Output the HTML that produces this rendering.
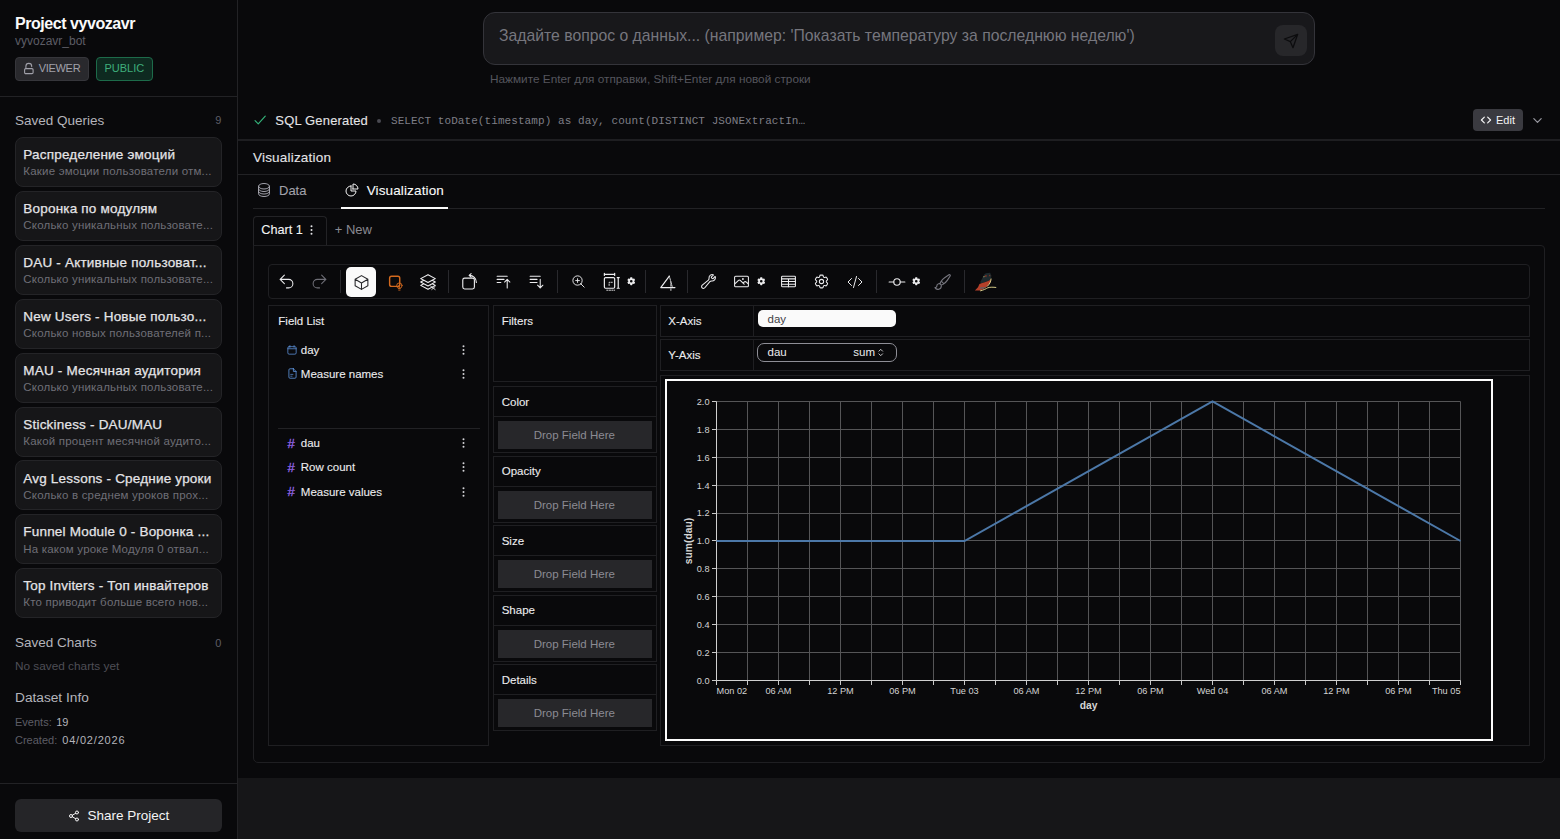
<!DOCTYPE html>
<html lang="ru">
<head>
<meta charset="utf-8">
<title>Project vyvozavr</title>
<style>
*{box-sizing:border-box;margin:0;padding:0}
html,body{width:1560px;height:839px;overflow:hidden;background:#09090b}
body{font-family:"Liberation Sans",sans-serif;color:#e4e4e7;position:relative;font-size:13px}
.t{position:absolute;white-space:nowrap;line-height:1}
svg{display:block;overflow:visible}
#side{position:absolute;left:0;top:0;width:238px;height:839px;border-right:1px solid #222225;background:#09090b}
.badge{position:absolute;top:57px;height:24px;border-radius:4px;font-size:11px;line-height:22px;white-space:nowrap}
.q{position:absolute;left:15px;width:207px;height:50px;border:1px solid #242427;border-radius:8px;background:#161618}
.q b{position:absolute;left:7.300px;top:9.200px;font-size:13.500px;letter-spacing:0.200px;font-weight:400;-webkit-text-stroke:0.250px #e4e4e7;color:#e4e4e7;white-space:nowrap;line-height:16px}
.q i{position:absolute;left:7.300px;top:26.300px;font-style:normal;font-size:11.500px;letter-spacing:0.200px;color:#6f6f77;white-space:nowrap;line-height:14px}
#main{position:absolute;left:238px;top:0;width:1322px;height:778px;background:#09090b}
#foot{position:absolute;left:238px;top:778px;width:1322px;height:61px;background:#161618}
.hl{position:absolute;height:1px;background:#222225}
.vl{position:absolute;width:1px;background:#222225}
.box{position:absolute;border:1px solid #1f1f22}
.drop{position:absolute;left:4px;width:155px;height:27px;background:#28282b;color:#8a8a91;font-size:12px;text-align:center;line-height:27px}
.lbl{position:absolute;font-size:12px;color:#ececee;white-space:nowrap;line-height:14px}
.ico{position:absolute;fill:none;stroke:#ececee;stroke-width:1.5;stroke-linecap:round;stroke-linejoin:round}
.ax text{font-family:"Liberation Sans",sans-serif;font-size:9.200px;fill:#d4d4d4}
</style>
</head>
<body>
<div id="side">
<div class="t" style="left:15px;top:16px;font-size:16px;color:#fafafa;letter-spacing:-0.450px;font-weight:700">Project vyvozavr</div>
<div class="t" style="left:15px;top:35px;font-size:12px;color:#5d5d66;">vyvozavr_bot</div>
<div class="badge" style="left:15px;width:74px;background:#29292d;border:1px solid #36363b;color:#a1a1aa"><svg class="ico" style="left:7px;top:3.500px;stroke:#a1a1aa;stroke-width:1.100" width="12" height="13" viewBox="0 0 12 13"><rect x="1.600" y="6.600" width="8.500" height="5" rx="1.200"/><path d="M2.900 6.500V4.300a2.900 2.900 0 0 1 5.800 0v.300"/></svg><span style="position:absolute;left:22.700px;top:-1px;letter-spacing:-0.300px">VIEWER</span></div>
<div class="badge" style="left:96px;width:57px;background:#0e2a20;border:1px solid #1d6b4a;color:#3fae7c"><span style="position:absolute;left:7.500px;top:-1px">PUBLIC</span></div>
<div class="hl" style="left:0;top:96px;width:237px"></div>
<div class="t" style="left:15px;top:114px;font-size:13.5px;color:#b4b4bb;">Saved Queries</div>
<div class="t" style="left:215.3px;top:115px;font-size:11px;color:#5d5d66;">9</div>
<div class="q" style="top:137.00px"><b>Распределение эмоций</b><i>Какие эмоции пользователи отм...</i></div>
<div class="q" style="top:190.90px"><b>Воронка по модулям</b><i>Сколько уникальных пользовате...</i></div>
<div class="q" style="top:244.80px"><b>DAU - Активные пользоват...</b><i>Сколько уникальных пользовате...</i></div>
<div class="q" style="top:298.70px"><b>New Users - Новые пользо...</b><i>Сколько новых пользователей п...</i></div>
<div class="q" style="top:352.60px"><b>MAU - Месячная аудитория</b><i>Сколько уникальных пользовате...</i></div>
<div class="q" style="top:406.50px"><b>Stickiness - DAU/MAU</b><i>Какой процент месячной аудито...</i></div>
<div class="q" style="top:460.40px"><b>Avg Lessons - Средние уроки</b><i>Сколько в среднем уроков прох...</i></div>
<div class="q" style="top:514.30px"><b>Funnel Module 0 - Воронка ...</b><i>На каком уроке Модуля 0 отвал...</i></div>
<div class="q" style="top:568.20px"><b>Top Inviters - Топ инвайтеров</b><i>Кто приводит больше всего нов...</i></div>
<div class="t" style="left:15px;top:636px;font-size:13.5px;color:#b4b4bb;">Saved Charts</div>
<div class="t" style="left:215.3px;top:638px;font-size:11px;color:#5d5d66;">0</div>
<div class="t" style="left:15px;top:661px;font-size:11.8px;color:#4e4e56;">No saved charts yet</div>
<div class="t" style="left:15px;top:691px;font-size:13.7px;color:#b4b4bb;">Dataset Info</div>
<div class="t" style="left:15px;top:717px;font-size:11px;color:#5d5d66;">Events: <span style="color:#b4b4bb;margin-left:1.500px">19</span></div>
<div class="t" style="left:15px;top:735px;font-size:11px;color:#5d5d66;">Created: <span style="color:#b4b4bb;letter-spacing:0.800px;margin-left:2px">04/02/2026</span></div>
<div class="hl" style="left:0;top:783px;width:237px"></div>
<div style="position:absolute;left:15px;top:799px;width:207px;height:33px;border-radius:6px;background:#252528"><svg class="ico" style="left:53px;top:10.500px;stroke:#f4f4f5;stroke-width:2" width="12" height="12" viewBox="0 0 24 24"><circle cx="18" cy="5" r="3"/><circle cx="6" cy="12" r="3"/><circle cx="18" cy="19" r="3"/><path d="M8.590 13.510l6.830 3.980M15.410 6.510l-6.820 3.980"/></svg></div>
<div class="t" style="left:87.4px;top:809px;font-size:13.5px;color:#f4f4f5;">Share Project</div>
</div>
<div id="main"></div>
<div id="foot"></div>
<div style="position:absolute;left:483px;top:12px;width:832px;height:53px;border-radius:12px;background:#18181b;border:1px solid #34343a"></div>
<div class="t" style="left:499px;top:28px;font-size:15.75px;color:#76767e;">Задайте вопрос о данных... (например: 'Показать температуру за последнюю неделю')</div>
<div style="position:absolute;left:1275px;top:24.500px;width:31.500px;height:31.500px;border-radius:8px;background:#27272a"><svg class="ico" style="left:8px;top:8px;stroke:#0c0c0e;stroke-width:1.900" width="16" height="16" viewBox="0 0 24 24"><path d="M22 2 11 13M22 2l-7 20-4-9-9-4 20-7Z"/></svg></div>
<div class="t" style="left:490px;top:74px;font-size:11.8px;color:#55555d;">Нажмите Enter для отправки, Shift+Enter для новой строки</div>
<svg class="ico" style="left:253px;top:113px;stroke:#34b37a;stroke-width:2" width="14" height="14" viewBox="0 0 24 24"><path d="M3.500 13l5.500 5.500L21 5.500"/></svg>
<div class="t" style="left:275.3px;top:114px;font-size:13px;color:#e4e4e7;letter-spacing:0.160px;-webkit-text-stroke:0.100px #e4e4e7">SQL Generated</div>
<div style="position:absolute;left:377px;top:119px;width:4px;height:4px;border-radius:2px;background:#4a4a52"></div>
<div class="t" style="left:391px;top:116px;font-size:11px;color:#7e7e86;font-family:'Liberation Mono',monospace;letter-spacing:0.080px">SELECT toDate(timestamp) as day, count(DISTINCT JSONExtractIn…</div>
<div style="position:absolute;left:1473px;top:109px;width:50px;height:22px;border-radius:4px;background:#3a3a40"><svg class="ico" style="left:8px;top:6px;stroke:#f4f4f5;stroke-width:2.800" width="10" height="10" viewBox="0 0 24 24"><path d="M8 5 1 12l7 7M16 5l7 7-7 7"/></svg></div>
<div class="t" style="left:1496px;top:115px;font-size:11px;color:#f4f4f5;">Edit</div>
<svg class="ico" style="left:1532px;top:115px;stroke:#9a9aa2;stroke-width:2.600" width="11" height="11" viewBox="0 0 24 24"><path d="M4 8l8 8 8-8"/></svg>
<div class="hl" style="left:238px;top:139px;width:1322px;height:2px;background:#1e1e21"></div>
<div class="t" style="left:253px;top:151px;font-size:13.5px;color:#e4e4e7;letter-spacing:0.200px;-webkit-text-stroke:0.100px #e4e4e7">Visualization</div>
<div class="hl" style="left:238px;top:174px;width:1322px"></div>
<svg class="ico" style="left:255.600px;top:182px;stroke:#a1a1aa;stroke-width:1.500" width="16" height="16" viewBox="0 0 24 24"><path d="M20.250 6.375c0 2.278-3.694 4.125-8.250 4.125S3.750 8.653 3.750 6.375m16.500 0c0-2.278-3.694-4.125-8.250-4.125S3.750 4.097 3.750 6.375m16.500 0v11.250c0 2.278-3.694 4.125-8.250 4.125s-8.250-1.847-8.250-4.125V6.375m16.500 0v3.750m-16.500-3.750v3.750m16.500 0v3.750C20.250 16.153 16.556 18 12 18s-8.250-1.847-8.250-4.125v-3.750m16.500 0c0 2.278-3.694 4.125-8.250 4.125s-8.250-1.847-8.250-4.125"/></svg>
<div class="t" style="left:279px;top:184px;font-size:13px;color:#a1a1aa;-webkit-text-stroke:0.100px #a1a1aa">Data</div>
<svg class="ico" style="left:343.800px;top:182.200px;stroke:#f4f4f5;stroke-width:1.500" width="16" height="16" viewBox="0 0 24 24"><path d="M10.500 6a7.500 7.500 0 1 0 7.500 7.500h-7.500V6Z"/><path d="M13.500 10.500H21A7.500 7.500 0 0 0 13.500 3v7.500Z"/></svg>
<div class="t" style="left:366.7px;top:184px;font-size:13.5px;color:#fafafa;letter-spacing:0.130px;-webkit-text-stroke:0.100px #fafafa">Visualization</div>
<div class="hl" style="left:253px;top:208px;width:1292px"></div>
<div style="position:absolute;left:341px;top:207px;width:107px;height:2px;background:#fafafa"></div>
<div style="position:absolute;left:253px;top:216px;width:74px;height:30px;border:1px solid #232326;border-bottom:none;border-radius:4px 4px 0 0"></div>
<div class="t" style="left:261.3px;top:224px;font-size:12.7px;color:#f4f4f5;-webkit-text-stroke:0.100px #f4f4f5">Chart 1</div>
<svg class="ico" style="left:309.500px;top:225px;stroke:none;fill:#e4e4e7" width="3" height="10" viewBox="0 0 3 10"><circle cx="1.500" cy="1.200" r="1"/><circle cx="1.500" cy="5" r="1"/><circle cx="1.500" cy="8.800" r="1"/></svg>
<div class="t" style="left:334.7px;top:223px;font-size:13px;color:#8a8a92;">+ New</div>
<div style="position:absolute;left:253px;top:245px;width:1292px;height:518px;border:1px solid #1f1f22;border-radius:0 4px 5px 5px"></div>
<div class="box" style="left:268px;top:264px;width:1262px;height:35px;border-radius:4px;border-color:#1f1f22"></div>
<svg class="ico" style="left:277.5px;top:273.0px;stroke:#ececee;stroke-width:1.5" width="17" height="17" viewBox="0 0 24 24"><path d="M9 15 3 9m0 0 6-6M3 9h12a6 6 0 0 1 0 12h-3"/></svg>
<svg class="ico" style="left:310.5px;top:273.0px;stroke:#6e6e76;stroke-width:1.5" width="17" height="17" viewBox="0 0 24 24"><path d="m15 15 6-6m0 0-6-6m6 6H9a6 6 0 0 0 0 12h3"/></svg>
<div class="vl" style="left:340px;top:270px;height:23px;background:#29292d"></div>
<div style="position:absolute;left:346px;top:267px;width:30px;height:30px;border-radius:5px;background:#fafafa"></div>
<svg class="ico" style="left:352.5px;top:273.5px;stroke:#27272a;stroke-width:1.5" width="17" height="17" viewBox="0 0 24 24"><path d="m21 7.5-9-5.25L3 7.5m18 0-9 5.25m9-5.25v9l-9 5.25M3 7.5l9 5.25M3 7.5v9l9 5.25m0-9v9"/></svg>
<svg class="ico" style="left:387.0px;top:274.0px;stroke:#d2691e;stroke-width:1.5" width="18" height="18" viewBox="0 0 24 24"><rect x="3.5" y="3" width="13.5" height="13.5" rx="2.5" stroke-width="1.9"/><circle cx="16.5" cy="15.5" r="3.6" stroke-width="1.2"/><path d="M15.2 19.5h2.6M15.6 21.5h1.8M16.5 15.2v3.6" stroke-width="1.1"/></svg>
<svg class="ico" style="left:419.0px;top:272.5px;stroke:#ececee;stroke-width:1.5" width="18" height="18" viewBox="0 0 24 24"><path d="M6.429 9.75 2.25 12l4.179 2.25m0-4.5 5.571 3 5.571-3m-11.142 0L2.25 7.5 12 2.25l9.75 5.25-4.179 2.25m0 0L21.75 12l-4.179 2.25m0 0 4.179 2.25L12 21.75 2.25 16.5l4.179-2.25m11.142 0-5.571 3-5.571-3"/><path d="M15.5 17.5l6 4.5M17 22l4.5-4" stroke-width="1.2"/></svg>
<div class="vl" style="left:448px;top:270px;height:23px;background:#29292d"></div>
<svg class="ico" style="left:460.0px;top:272.5px;stroke:#ececee;stroke-width:1.5" width="18" height="18" viewBox="0 0 24 24"><rect x="3.700" y="6.800" width="15.500" height="14.500" rx="2.500"/><path d="M12.500 3.200A9.300 9.300 0 0 1 21.800 12.500"/><path d="M14.800 .800 12.300 3.100l2.500 2.500"/></svg>
<svg class="ico" style="left:494.5px;top:273.0px;stroke:#ececee;stroke-width:1.5" width="17" height="17" viewBox="0 0 24 24"><path d="M3 4.5h14.25M3 9h9.75M3 13.5h5.25m5.25-.75L17.25 9m0 0L21 12.75M17.25 9v12"/></svg>
<svg class="ico" style="left:527.5px;top:273.0px;stroke:#ececee;stroke-width:1.5" width="17" height="17" viewBox="0 0 24 24"><path d="M3 4.5h14.25M3 9h9.75M3 13.5h9.75m4.5-4.5v12m0 0-3.75-3.75M17.25 21 21 17.25"/></svg>
<div class="vl" style="left:557px;top:270px;height:23px;background:#29292d"></div>
<svg class="ico" style="left:570.5px;top:273.7px;stroke:#ececee;stroke-width:1.5" width="15" height="15" viewBox="0 0 24 24"><path d="m21 21-5.197-5.197m0 0A7.5 7.5 0 1 0 5.196 5.196a7.5 7.5 0 0 0 10.607 10.607ZM10.5 7.5v6m3-3h-6"/></svg>
<svg class="ico" style="left:601.5px;top:272.0px;stroke:#ececee;stroke-width:1.5" width="19" height="19" viewBox="0 0 24 24"><rect x="3" y="7" width="13" height="13.5" rx="1.5"/><path d="M3 3h13M3 1.7v2.6M16 1.7v2.6M20.5 7v13.5M19.2 7h2.6M19.2 20.5h2.6"/><path d="M9 17v-4h4M6 23h10" stroke-dasharray="1.6 1.6" stroke-width="1.1"/></svg>
<svg class="ico" style="left:625.75px;top:276.25px;stroke:none;fill:#ececee" width="10.500" height="10.500" viewBox="0 0 24 24"><path fill-rule="evenodd" d="M9.594 3.94c.09-.542.56-.94 1.11-.94h2.593c.55 0 1.02.398 1.11.94l.213 1.281c.063.374.313.686.645.87.074.04.147.083.22.127.325.196.72.257 1.075.124l1.217-.456a1.125 1.125 0 0 1 1.37.49l1.296 2.247a1.125 1.125 0 0 1-.26 1.431l-1.003.827c-.293.241-.438.613-.43.992a7.723 7.723 0 0 1 0 .255c-.008.378.137.75.43.991l1.004.827c.424.35.534.955.26 1.43l-1.298 2.247a1.125 1.125 0 0 1-1.369.491l-1.217-.456c-.355-.133-.75-.072-1.076.124a6.47 6.47 0 0 1-.22.128c-.331.183-.581.495-.644.869l-.213 1.281c-.09.543-.56.94-1.11.94h-2.594c-.55 0-1.019-.398-1.11-.94l-.213-1.281c-.062-.374-.312-.686-.644-.87a6.52 6.52 0 0 1-.22-.127c-.325-.196-.72-.257-1.076-.124l-1.217.456a1.125 1.125 0 0 1-1.369-.49l-1.297-2.247a1.125 1.125 0 0 1 .26-1.431l1.004-.827c.292-.24.437-.613.43-.991a6.932 6.932 0 0 1 0-.255c.007-.38-.138-.751-.43-.992l-1.004-.827a1.125 1.125 0 0 1-.26-1.43l1.297-2.247a1.125 1.125 0 0 1 1.37-.491l1.216.456c.356.133.751.072 1.076-.124.072-.044.146-.086.22-.128.332-.183.582-.495.644-.869l.214-1.28ZM15 12a3 3 0 1 1-6 0 3 3 0 0 1 6 0Z"/></svg>
<div class="vl" style="left:645px;top:270px;height:23px;background:#29292d"></div>
<svg class="ico" style="left:657.5px;top:272.0px;stroke:#ececee;stroke-width:1.5" width="19" height="19" viewBox="0 0 24 24"><path d="M14.300 5.200 3.500 19.700h17.900"/><path d="M14.300 5.200l4 14.500M16.300 12.700v11" stroke-width="1.100" stroke-dasharray="1.600 1.400"/></svg>
<div class="vl" style="left:687px;top:270px;height:23px;background:#29292d"></div>
<svg class="ico" style="left:700.0px;top:273.0px;stroke:#ececee;stroke-width:1.5" width="17" height="17" viewBox="0 0 24 24"><path d="M21.75 6.75a4.5 4.5 0 0 1-4.884 4.484c-1.076-.091-2.264.071-2.95.904l-7.152 8.684a2.548 2.548 0 1 1-3.586-3.586l8.684-7.152c.833-.686.995-1.874.904-2.95a4.5 4.5 0 0 1 6.336-4.486l-3.276 3.276a3.004 3.004 0 0 0 2.25 2.25l3.276-3.276c.256.565.398 1.192.398 1.852Z"/></svg>
<svg class="ico" style="left:733.0px;top:273.0px;stroke:#ececee;stroke-width:1.5" width="17" height="17" viewBox="0 0 24 24"><path d="m2.25 15.75 5.159-5.159a2.25 2.25 0 0 1 3.182 0l5.159 5.159m-1.5-1.5 1.409-1.409a2.25 2.25 0 0 1 3.182 0l2.909 2.909m-18 3.75h16.5a1.500 1.500 0 0 0 1.500-1.500V6a1.500 1.500 0 0 0-1.500-1.500H3.750A1.500 1.500 0 0 0 2.250 6v12a1.500 1.500 0 0 0 1.500 1.500Z"/><circle cx="14" cy="8.4" r=".6"/></svg>
<svg class="ico" style="left:755.75px;top:276.25px;stroke:none;fill:#ececee" width="10.500" height="10.500" viewBox="0 0 24 24"><path fill-rule="evenodd" d="M9.594 3.94c.09-.542.56-.94 1.11-.94h2.593c.55 0 1.02.398 1.11.94l.213 1.281c.063.374.313.686.645.87.074.04.147.083.22.127.325.196.72.257 1.075.124l1.217-.456a1.125 1.125 0 0 1 1.37.49l1.296 2.247a1.125 1.125 0 0 1-.26 1.431l-1.003.827c-.293.241-.438.613-.43.992a7.723 7.723 0 0 1 0 .255c-.008.378.137.75.43.991l1.004.827c.424.35.534.955.26 1.43l-1.298 2.247a1.125 1.125 0 0 1-1.369.491l-1.217-.456c-.355-.133-.75-.072-1.076.124a6.47 6.47 0 0 1-.22.128c-.331.183-.581.495-.644.869l-.213 1.281c-.09.543-.56.94-1.11.94h-2.594c-.55 0-1.019-.398-1.11-.94l-.213-1.281c-.062-.374-.312-.686-.644-.87a6.52 6.52 0 0 1-.22-.127c-.325-.196-.72-.257-1.076-.124l-1.217.456a1.125 1.125 0 0 1-1.369-.49l-1.297-2.247a1.125 1.125 0 0 1 .26-1.431l1.004-.827c.292-.24.437-.613.43-.991a6.932 6.932 0 0 1 0-.255c.007-.38-.138-.751-.43-.992l-1.004-.827a1.125 1.125 0 0 1-.26-1.43l1.297-2.247a1.125 1.125 0 0 1 1.37-.491l1.216.456c.356.133.751.072 1.076-.124.072-.044.146-.086.22-.128.332-.183.582-.495.644-.869l.214-1.28ZM15 12a3 3 0 1 1-6 0 3 3 0 0 1 6 0Z"/></svg>
<svg class="ico" style="left:780.0px;top:273.0px;stroke:#ececee;stroke-width:1.5" width="17" height="17" viewBox="0 0 24 24"><rect x="2.25" y="4.5" width="19.5" height="15" rx="1.3"/><path d="M2.25 8.25h19.500M2.250 12h19.500M2.250 15.750h19.500M12 8.250v11.250"/></svg>
<svg class="ico" style="left:813.0px;top:273.0px;stroke:#ececee;stroke-width:1.5" width="17" height="17" viewBox="0 0 24 24"><path d="M9.594 3.94c.09-.542.56-.94 1.11-.94h2.593c.55 0 1.02.398 1.11.94l.213 1.281c.063.374.313.686.645.87.074.04.147.083.22.127.325.196.72.257 1.075.124l1.217-.456a1.125 1.125 0 0 1 1.37.49l1.296 2.247a1.125 1.125 0 0 1-.26 1.431l-1.003.827c-.293.241-.438.613-.43.992a7.723 7.723 0 0 1 0 .255c-.008.378.137.75.43.991l1.004.827c.424.35.534.955.26 1.43l-1.298 2.247a1.125 1.125 0 0 1-1.369.491l-1.217-.456c-.355-.133-.75-.072-1.076.124a6.47 6.47 0 0 1-.22.128c-.331.183-.581.495-.644.869l-.213 1.281c-.09.543-.56.94-1.11.94h-2.594c-.55 0-1.019-.398-1.11-.94l-.213-1.281c-.062-.374-.312-.686-.644-.87a6.52 6.52 0 0 1-.22-.127c-.325-.196-.72-.257-1.076-.124l-1.217.456a1.125 1.125 0 0 1-1.369-.49l-1.297-2.247a1.125 1.125 0 0 1 .26-1.431l1.004-.827c.292-.24.437-.613.43-.991a6.932 6.932 0 0 1 0-.255c.007-.38-.138-.751-.43-.992l-1.004-.827a1.125 1.125 0 0 1-.26-1.43l1.297-2.247a1.125 1.125 0 0 1 1.37-.491l1.216.456c.356.133.751.072 1.076-.124.072-.044.146-.086.22-.128.332-.183.582-.495.644-.869l.214-1.28Z"/><path d="M15 12a3 3 0 1 1-6 0 3 3 0 0 1 6 0Z"/></svg>
<svg class="ico" style="left:847.3px;top:273.5px;stroke:#ececee;stroke-width:1.5" width="16" height="16" viewBox="0 0 24 24"><path d="M17.25 6.75 22.5 12l-5.25 5.25m-10.5 0L1.5 12l5.25-5.25m7.500-3-4.500 16.500"/></svg>
<div class="vl" style="left:876px;top:270px;height:23px;background:#29292d"></div>
<svg class="ico" style="left:888.0px;top:272.5px;stroke:#ececee;stroke-width:1.5" width="18" height="18" viewBox="0 0 24 24"><circle cx="12" cy="12" r="4.300"/><path d="M1.500 12h6.200M16.300 12h6.200"/></svg>
<svg class="ico" style="left:910.75px;top:276.25px;stroke:none;fill:#ececee" width="10.500" height="10.500" viewBox="0 0 24 24"><path fill-rule="evenodd" d="M9.594 3.94c.09-.542.56-.94 1.11-.94h2.593c.55 0 1.02.398 1.11.94l.213 1.281c.063.374.313.686.645.87.074.04.147.083.22.127.325.196.72.257 1.075.124l1.217-.456a1.125 1.125 0 0 1 1.37.49l1.296 2.247a1.125 1.125 0 0 1-.26 1.431l-1.003.827c-.293.241-.438.613-.43.992a7.723 7.723 0 0 1 0 .255c-.008.378.137.75.43.991l1.004.827c.424.35.534.955.26 1.43l-1.298 2.247a1.125 1.125 0 0 1-1.369.491l-1.217-.456c-.355-.133-.75-.072-1.076.124a6.47 6.47 0 0 1-.22.128c-.331.183-.581.495-.644.869l-.213 1.281c-.09.543-.56.94-1.11.94h-2.594c-.55 0-1.019-.398-1.11-.94l-.213-1.281c-.062-.374-.312-.686-.644-.87a6.52 6.52 0 0 1-.22-.127c-.325-.196-.72-.257-1.076-.124l-1.217.456a1.125 1.125 0 0 1-1.369-.49l-1.297-2.247a1.125 1.125 0 0 1 .26-1.431l1.004-.827c.292-.24.437-.613.43-.991a6.932 6.932 0 0 1 0-.255c.007-.38-.138-.751-.43-.992l-1.004-.827a1.125 1.125 0 0 1-.26-1.43l1.297-2.247a1.125 1.125 0 0 1 1.37-.491l1.216.456c.356.133.751.072 1.076-.124.072-.044.146-.086.22-.128.332-.183.582-.495.644-.869l.214-1.28ZM15 12a3 3 0 1 1-6 0 3 3 0 0 1 6 0Z"/></svg>
<svg class="ico" style="left:934.0px;top:272.5px;stroke:#77777f;stroke-width:1.5" width="18" height="18" viewBox="0 0 24 24"><path d="M9.53 16.122a3 3 0 0 0-5.78 1.128 2.25 2.25 0 0 1-2.4 2.245 4.5 4.5 0 0 0 8.4-2.245c0-.399-.078-.78-.22-1.128Zm0 0a15.998 15.998 0 0 0 3.388-1.620m-5.043-.025a15.994 15.994 0 0 1 1.622-3.395m3.420 3.420a15.995 15.995 0 0 0 4.764-4.648l3.876-5.814a1.151 1.151 0 0 0-1.597-1.597L14.146 6.320a15.996 15.996 0 0 0-4.649 4.763m3.420 3.420a6.776 6.776 0 0 0-3.420-3.420"/></svg>
<div class="vl" style="left:964px;top:270px;height:23px;background:#29292d"></div>
<svg class="ico" style="left:968px;top:266px;stroke:none" width="36" height="32" viewBox="0 0 944 839"><path d="M470 190 580 180 612 250 604 345 545 385 440 425 352 455 318 425 395 285 425 225Z" fill="#1e2a2e"/><path d="M604 345 592 425 525 505 470 565 330 645 180 645 262 560 300 470 352 455 440 425 545 385Z" fill="#b5402a"/><path d="M452 235l40 10-10 50-35-15ZM555 230l30 5-5 40-30-10Z" fill="#7a3326"/><path d="M330 560l100-10 40 20-110 35-60-5Z" fill="#6b5a5c"/><path d="M606 340C600 420 560 480 510 530M330 650C420 625 470 600 520 570C590 550 660 555 730 562" fill="none" stroke="#d4ca88" stroke-width="26" stroke-linecap="round"/><path d="M400 275l30-10 5 25-25 10Z" fill="#b0a76a"/></svg>
<div class="box" style="left:268px;top:305px;width:221px;height:441px"></div>
<div class="t" style="left:278.3px;top:316px;font-size:11.5px;color:#ececee;-webkit-text-stroke:0.100px #ececee">Field List</div>
<svg class="ico" style="left:287px;top:344.500px;stroke:#5b8fd6;stroke-width:1.900" width="10" height="10" viewBox="0 0 24 24"><rect x="2" y="4" width="20" height="18" rx="3"/><path d="M2 9h20M7 1.500v4M17 1.500v4" /></svg>
<div class="t" style="left:300.8px;top:345px;font-size:11.5px;color:#ececee;-webkit-text-stroke:0.100px #ececee">day</div>
<svg class="ico" style="left:462px;top:345px;stroke:none;fill:#d4d4d8" width="3" height="10" viewBox="0 0 3 10"><circle cx="1.500" cy="1.200" r="1"/><circle cx="1.500" cy="5" r="1"/><circle cx="1.500" cy="8.800" r="1"/></svg>
<svg class="ico" style="left:287.500px;top:368px;stroke:#5b8fd6;stroke-width:1.900" width="9" height="11" viewBox="0 0 20 24"><path d="M12 1.500H4.500A2.500 2.500 0 0 0 2 4v16a2.500 2.500 0 0 0 2.500 2.500h11A2.500 2.500 0 0 0 18 20V7.500L12 1.500ZM12 1.500v6h6"/><path d="M6 14h5M6 18h3" stroke-width="1.600"/></svg>
<div class="t" style="left:300.8px;top:369px;font-size:11.5px;color:#ececee;-webkit-text-stroke:0.100px #ececee">Measure names</div>
<svg class="ico" style="left:462px;top:369px;stroke:none;fill:#d4d4d8" width="3" height="10" viewBox="0 0 3 10"><circle cx="1.500" cy="1.200" r="1"/><circle cx="1.500" cy="5" r="1"/><circle cx="1.500" cy="8.800" r="1"/></svg>
<div class="hl" style="left:278px;top:428px;width:202px;background:#222225"></div>
<div class="t" style="left:287.5px;top:437px;font-size:13px;color:#9466e6;-webkit-text-stroke:0.300px #9466e6">#</div>
<div class="t" style="left:300.8px;top:438px;font-size:11.5px;color:#ececee;-webkit-text-stroke:0.100px #ececee">dau</div>
<svg class="ico" style="left:462px;top:438px;stroke:none;fill:#d4d4d8" width="3" height="10" viewBox="0 0 3 10"><circle cx="1.500" cy="1.200" r="1"/><circle cx="1.500" cy="5" r="1"/><circle cx="1.500" cy="8.800" r="1"/></svg>
<div class="t" style="left:287.5px;top:461px;font-size:13px;color:#9466e6;-webkit-text-stroke:0.300px #9466e6">#</div>
<div class="t" style="left:300.8px;top:462px;font-size:11.5px;color:#ececee;-webkit-text-stroke:0.100px #ececee">Row count</div>
<svg class="ico" style="left:462px;top:462px;stroke:none;fill:#d4d4d8" width="3" height="10" viewBox="0 0 3 10"><circle cx="1.500" cy="1.200" r="1"/><circle cx="1.500" cy="5" r="1"/><circle cx="1.500" cy="8.800" r="1"/></svg>
<div class="t" style="left:287.5px;top:485px;font-size:13px;color:#9466e6;-webkit-text-stroke:0.300px #9466e6">#</div>
<div class="t" style="left:300.8px;top:487px;font-size:11.5px;color:#ececee;-webkit-text-stroke:0.100px #ececee">Measure values</div>
<svg class="ico" style="left:462px;top:487px;stroke:none;fill:#d4d4d8" width="3" height="10" viewBox="0 0 3 10"><circle cx="1.500" cy="1.200" r="1"/><circle cx="1.500" cy="5" r="1"/><circle cx="1.500" cy="8.800" r="1"/></svg>
<div class="box" style="left:493px;top:305px;width:164px;height:77px"></div>
<div class="hl" style="left:494px;top:335px;width:162px;background:#1f1f22"></div>
<div class="t" style="left:501.7px;top:316px;font-size:11.5px;color:#ececee;-webkit-text-stroke:0.100px #ececee">Filters</div>
<div class="box" style="left:493px;top:386px;width:164px;height:67px"></div>
<div class="hl" style="left:494px;top:416px;width:162px;background:#1f1f22"></div>
<div class="t" style="left:501.7px;top:397px;font-size:11.5px;color:#ececee;-webkit-text-stroke:0.100px #ececee">Color</div>
<div style="position:absolute;left:498px;top:421px;width:154px;height:28px;background:#27272a"></div>
<div class="t" style="left:533.7px;top:430px;font-size:11.5px;color:#8b8b93;">Drop Field Here</div>
<div class="box" style="left:493px;top:456px;width:164px;height:67px"></div>
<div class="hl" style="left:494px;top:486px;width:162px;background:#1f1f22"></div>
<div class="t" style="left:501.7px;top:466px;font-size:11.5px;color:#ececee;-webkit-text-stroke:0.100px #ececee">Opacity</div>
<div style="position:absolute;left:498px;top:491px;width:154px;height:28px;background:#27272a"></div>
<div class="t" style="left:533.7px;top:500px;font-size:11.5px;color:#8b8b93;">Drop Field Here</div>
<div class="box" style="left:493px;top:525px;width:164px;height:67px"></div>
<div class="hl" style="left:494px;top:555px;width:162px;background:#1f1f22"></div>
<div class="t" style="left:501.7px;top:536px;font-size:11.5px;color:#ececee;-webkit-text-stroke:0.100px #ececee">Size</div>
<div style="position:absolute;left:498px;top:560px;width:154px;height:28px;background:#27272a"></div>
<div class="t" style="left:533.7px;top:569px;font-size:11.5px;color:#8b8b93;">Drop Field Here</div>
<div class="box" style="left:493px;top:595px;width:164px;height:67px"></div>
<div class="hl" style="left:494px;top:625px;width:162px;background:#1f1f22"></div>
<div class="t" style="left:501.7px;top:605px;font-size:11.5px;color:#ececee;-webkit-text-stroke:0.100px #ececee">Shape</div>
<div style="position:absolute;left:498px;top:630px;width:154px;height:28px;background:#27272a"></div>
<div class="t" style="left:533.7px;top:639px;font-size:11.5px;color:#8b8b93;">Drop Field Here</div>
<div class="box" style="left:493px;top:664px;width:164px;height:67px"></div>
<div class="hl" style="left:494px;top:694px;width:162px;background:#1f1f22"></div>
<div class="t" style="left:501.7px;top:675px;font-size:11.5px;color:#ececee;-webkit-text-stroke:0.100px #ececee">Details</div>
<div style="position:absolute;left:498px;top:699px;width:154px;height:28px;background:#27272a"></div>
<div class="t" style="left:533.7px;top:708px;font-size:11.5px;color:#8b8b93;">Drop Field Here</div>
<div class="box" style="left:660px;top:305px;width:870px;height:32px"></div>
<div class="vl" style="left:753px;top:306px;height:30px;background:#1f1f22"></div>
<div class="t" style="left:668.3px;top:316px;font-size:11.5px;color:#ececee;-webkit-text-stroke:0.100px #ececee">X-Axis</div>
<div style="position:absolute;left:758px;top:310px;width:137.500px;height:17px;border-radius:5px;background:#fafafa"></div>
<div class="t" style="left:767.5px;top:314px;font-size:11.5px;color:#3f3f46;">day</div>
<div class="box" style="left:660px;top:339px;width:870px;height:32px"></div>
<div class="vl" style="left:753px;top:340px;height:30px;background:#1f1f22"></div>
<div class="t" style="left:668.3px;top:350px;font-size:11.5px;color:#ececee;-webkit-text-stroke:0.100px #ececee">Y-Axis</div>
<div style="position:absolute;left:757px;top:343px;width:139.500px;height:19px;border-radius:7px;border:1px solid #8e8e96"></div>
<div class="t" style="left:767.5px;top:347px;font-size:11.5px;color:#ececee;">dau</div>
<div class="t" style="left:853.3px;top:347px;font-size:11.5px;color:#ececee;">sum</div>
<svg class="ico" style="left:878px;top:348px;stroke:#ececee;stroke-width:1.900" width="5.500" height="9" viewBox="0 0 12 20"><path d="M2 7l4-4 4 4M2 13l4 4 4-4"/></svg>
<div class="box" style="left:660px;top:375px;width:870px;height:371px"></div>
<div style="position:absolute;left:665px;top:379px;width:828px;height:362px;border:2px solid #fcfcfc"></div>
<svg class="ax" style="position:absolute;left:0;top:0" width="1560" height="839" viewBox="0 0 1560 839">
<path d="M716.50 401.5V680.5M747.50 401.5V680.5M778.50 401.5V680.5M809.50 401.5V680.5M840.50 401.5V680.5M871.50 401.5V680.5M902.50 401.5V680.5M933.50 401.5V680.5M964.50 401.5V680.5M995.50 401.5V680.5M1026.50 401.5V680.5M1057.50 401.5V680.5M1088.50 401.5V680.5M1119.50 401.5V680.5M1150.50 401.5V680.5M1181.50 401.5V680.5M1212.50 401.5V680.5M1243.50 401.5V680.5M1274.50 401.5V680.5M1305.50 401.5V680.5M1336.50 401.5V680.5M1367.50 401.5V680.5M1398.50 401.5V680.5M1429.50 401.5V680.5M1460.50 401.5V680.5M716.5 401.50H1460.5M716.5 429.50H1460.5M716.5 457.50H1460.5M716.5 485.50H1460.5M716.5 513.50H1460.5M716.5 540.50H1460.5M716.5 568.50H1460.5M716.5 596.50H1460.5M716.5 624.50H1460.5M716.5 652.50H1460.5M716.5 680.50H1460.5" stroke="#555557" stroke-width="1" fill="none"/>
<path d="M716.50 680.5v4.500M747.50 680.5v4.500M778.50 680.5v4.500M809.50 680.5v4.500M840.50 680.5v4.500M871.50 680.5v4.500M902.50 680.5v4.500M933.50 680.5v4.500M964.50 680.5v4.500M995.50 680.5v4.500M1026.50 680.5v4.500M1057.50 680.5v4.500M1088.50 680.5v4.500M1119.50 680.5v4.500M1150.50 680.5v4.500M1181.50 680.5v4.500M1212.50 680.5v4.500M1243.50 680.5v4.500M1274.50 680.5v4.500M1305.50 680.5v4.500M1336.50 680.5v4.500M1367.50 680.5v4.500M1398.50 680.5v4.500M1429.50 680.5v4.500M1460.50 680.5v4.500M716.5 401.50h-4.500M716.5 429.50h-4.500M716.5 457.50h-4.500M716.5 485.50h-4.500M716.5 513.50h-4.500M716.5 540.50h-4.500M716.5 568.50h-4.500M716.5 596.50h-4.500M716.5 624.50h-4.500M716.5 652.50h-4.500M716.5 680.50h-4.500" stroke="#c8c8c8" stroke-width="1" fill="none"/>
<path d="M716.5 401.5V680.5H1460.5" stroke="#d0d0d0" stroke-width="1" fill="none"/>
<path d="M716.5 541.0L964.50 541.0L1212.50 401.5L1460.5 541.0" stroke="#4c78a8" stroke-width="2" fill="none" stroke-linejoin="miter"/>
<text x="709.5" y="683.80" text-anchor="end">0.0</text>
<text x="709.5" y="655.90" text-anchor="end">0.2</text>
<text x="709.5" y="628.00" text-anchor="end">0.4</text>
<text x="709.5" y="600.10" text-anchor="end">0.6</text>
<text x="709.5" y="572.20" text-anchor="end">0.8</text>
<text x="709.5" y="544.30" text-anchor="end">1.0</text>
<text x="709.5" y="516.40" text-anchor="end">1.2</text>
<text x="709.5" y="488.50" text-anchor="end">1.4</text>
<text x="709.5" y="460.60" text-anchor="end">1.6</text>
<text x="709.5" y="432.70" text-anchor="end">1.8</text>
<text x="709.5" y="404.80" text-anchor="end">2.0</text>
<text x="716.50" y="694.300" text-anchor="start">Mon 02</text>
<text x="778.50" y="694.300" text-anchor="middle">06 AM</text>
<text x="840.50" y="694.300" text-anchor="middle">12 PM</text>
<text x="902.50" y="694.300" text-anchor="middle">06 PM</text>
<text x="964.50" y="694.300" text-anchor="middle">Tue 03</text>
<text x="1026.50" y="694.300" text-anchor="middle">06 AM</text>
<text x="1088.50" y="694.300" text-anchor="middle">12 PM</text>
<text x="1150.50" y="694.300" text-anchor="middle">06 PM</text>
<text x="1212.50" y="694.300" text-anchor="middle">Wed 04</text>
<text x="1274.50" y="694.300" text-anchor="middle">06 AM</text>
<text x="1336.50" y="694.300" text-anchor="middle">12 PM</text>
<text x="1398.50" y="694.300" text-anchor="middle">06 PM</text>
<text x="1460.50" y="694.300" text-anchor="end">Thu 05</text>
<text x="1088.5" y="708.500" text-anchor="middle" style="font-size:10.300px;font-weight:700">day</text>
<text transform="translate(691.500 541) rotate(-90)" text-anchor="middle" style="font-size:10.300px;font-weight:700">sum(dau)</text>
</svg>
</body>
</html>
